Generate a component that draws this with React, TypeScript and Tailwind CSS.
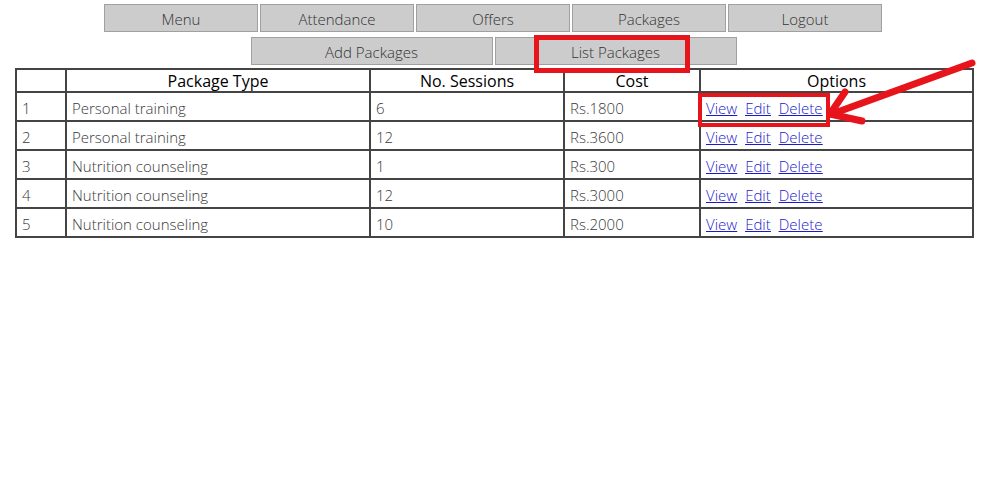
import React from "react";

const font = { fontFamily: '"Open Sans", "Liberation Sans", sans-serif' };

const rows = [
  { id: 1, type: "Personal training", sessions: "6", cost: "Rs.1800" },
  { id: 2, type: "Personal training", sessions: "12", cost: "Rs.3600" },
  { id: 3, type: "Nutrition counseling", sessions: "1", cost: "Rs.300" },
  { id: 4, type: "Nutrition counseling", sessions: "12", cost: "Rs.3000" },
  { id: 5, type: "Nutrition counseling", sessions: "10", cost: "Rs.2000" },
];

function NavButton({ label, wide }: { label: string; wide?: boolean }) {
  return (
    <div
      className={`${wide ? "w-[242px]" : "w-[154px]"} flex h-[28px] items-center justify-center border border-[#a0a0a0] bg-[#cccccc] pt-[2px] text-[15px] font-light text-[#333]`}
    >
      {label}
    </div>
  );
}

export default function App() {
  return (
    <div className="relative h-[499px] w-[991px] bg-white" style={font}>
      <nav className="flex flex-col items-center pt-[4px]">
        <div className="flex gap-[2px] pr-[5px]">
          {["Menu", "Attendance", "Offers", "Packages", "Logout"].map((l) => (
            <NavButton key={l} label={l} />
          ))}
        </div>
        <div className="mt-[5px] flex gap-[2px] pr-[4px]">
          <NavButton label="Add Packages" wide />
          <NavButton label="List Packages" wide />
        </div>
      </nav>

      <table className="ml-[15px] mt-[3px] w-[959px] table-fixed border-collapse border-2 border-[#444] text-[15px]">
        <colgroup>
          <col className="w-[50px]" />
          <col className="w-[304px]" />
          <col className="w-[194px]" />
          <col className="w-[136px]" />
          <col />
        </colgroup>
        <thead>
          <tr className="h-[23px] text-[16px] text-black">
            <th className="border-2 border-[#444] pt-[1px] font-normal leading-[19px]"></th>
            <th className="border-2 border-[#444] pt-[1px] font-normal leading-[19px]">Package Type</th>
            <th className="border-2 border-[#444] pt-[1px] font-normal leading-[19px]">No. Sessions</th>
            <th className="border-2 border-[#444] pt-[1px] font-normal leading-[19px]">Cost</th>
            <th className="border-2 border-[#444] pt-[1px] font-normal leading-[19px]">Options</th>
          </tr>
        </thead>
        <tbody className="font-light text-[#3a3a3a]">
          {rows.map((r) => (
            <tr key={r.id} className="h-[29px]">
              <td className="border-2 border-[#444] px-[5px] pt-[4px]">{r.id}</td>
              <td className="border-2 border-[#444] px-[5px] pt-[4px]">{r.type}</td>
              <td className="border-2 border-[#444] px-[5px] pt-[4px]">{r.sessions}</td>
              <td className="border-2 border-[#444] px-[5px] pt-[4px]">{r.cost}</td>
              <td className="border-2 border-[#444] px-[5px] pt-[4px]">
                <span className="flex gap-[8px] text-[#1a1acc] underline">
                  <a>View</a>
                  <a>Edit</a>
                  <a>Delete</a>
                </span>
              </td>
            </tr>
          ))}
        </tbody>
      </table>

      {/* annotations */}
      <div className="absolute left-[534px] top-[35px] h-[38px] w-[156px] border-[5px] border-[#e8141c]" />
      <div className="absolute left-[698px] top-[93px] h-[34px] w-[132px] border-[4px] border-[#e8141c]" />
      <svg className="absolute left-0 top-0" width="991" height="499">
        <g stroke="#e8141c" strokeWidth="7" strokeLinecap="round" fill="none">
          <line x1="972" y1="63" x2="832" y2="114" />
          <polyline points="845,92 830,114 862,121" strokeLinejoin="round" />
        </g>
      </svg>
    </div>
  );
}
